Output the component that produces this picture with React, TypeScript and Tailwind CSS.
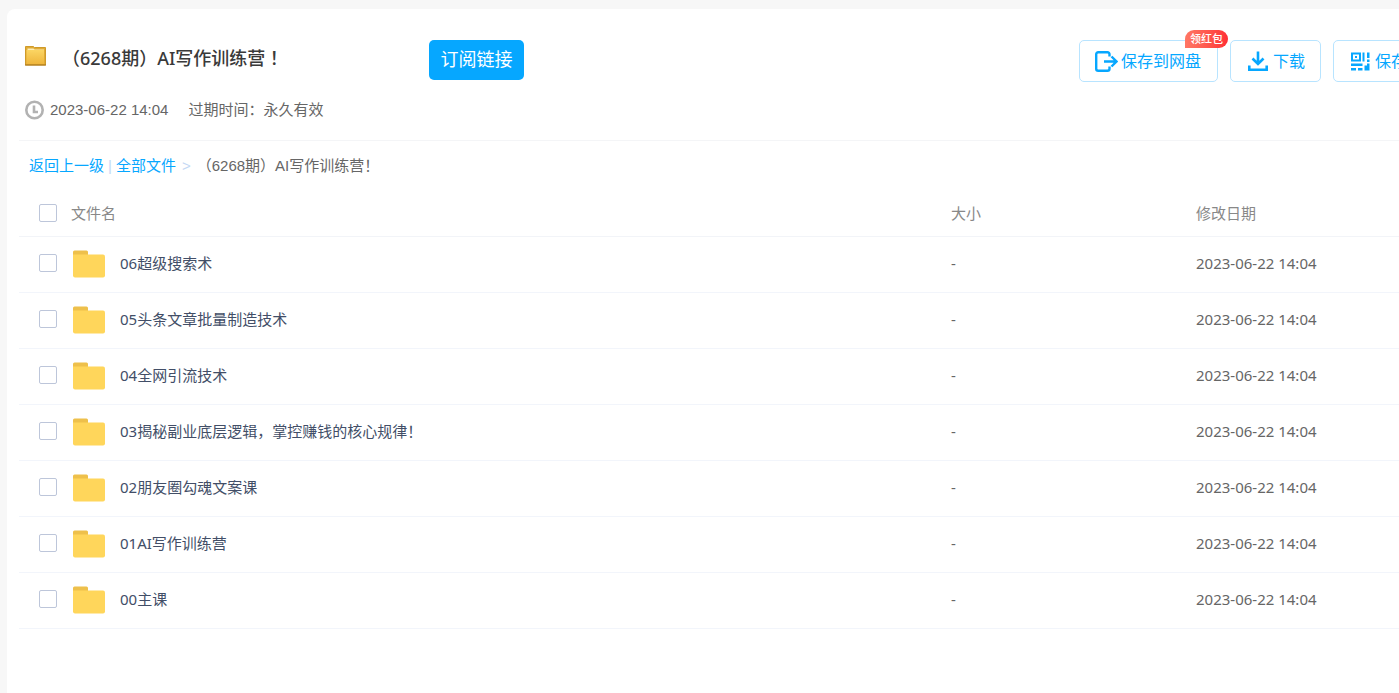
import React from "react";

const files = [
  "06超级搜索术",
  "05头条文章批量制造技术",
  "04全网引流技术",
  "03揭秘副业底层逻辑，掌控赚钱的核心规律！",
  "02朋友圈勾魂文案课",
  "01AI写作训练营",
  "00主课",
].map((name) => ({ name, size: "-", date: "2023-06-22 14:04" }));

const TitleFolderIcon = () => (
  <svg width="21" height="20" viewBox="0 0 21 20" className="shrink-0" aria-hidden="true">
    <defs>
      <linearGradient id="titleFolder" x1="0" y1="0" x2="0" y2="1">
        <stop offset="0" stopColor="#fbd563" />
        <stop offset="1" stopColor="#efb63c" />
      </linearGradient>
    </defs>
    <path d="M0.5 0.5h8l1 1h11v17.500h-20z" fill="#e0ab35" stroke="#cf9a2a" />
    <path d="M2.500 2.500h6l1 1h9.500v2h-16.500z" fill="#fdeeb8" />
    <path d="M1.500 4h17.500v14h-17.500z" fill="url(#titleFolder)" />
    <path d="M0 19h21" stroke="#a8741a" />
  </svg>
);

const ClockIcon = () => (
  <svg width="19" height="20" viewBox="0 0 19 20" fill="none" className="shrink-0" aria-hidden="true">
    <circle cx="9.500" cy="10" r="8.200" stroke="#b2b2b2" strokeWidth="2.600" />
    <path d="M9 5.500v6.500h4" stroke="#b2b2b2" strokeWidth="2.600" />
  </svg>
);

const FolderIcon = () => (
  <svg width="32" height="28" viewBox="0 0 32 28" className="block" aria-hidden="true">
    <path d="M0 2a1.500 1.500 0 0 1 1.500-1.500h12a1.500 1.500 0 0 1 1.500 1.500v5H0z" fill="#eec04b" />
    <path d="M0 4.500h30a2 2 0 0 1 2 2v19a2 2 0 0 1-2 2H2a2 2 0 0 1-2-2z" fill="#ffd65b" />
  </svg>
);

const SaveIcon = () => (
  <svg width="23" height="21" viewBox="0 0 23 21" fill="none" stroke="#06a7ff" strokeWidth="2.400" aria-hidden="true">
    <path d="M14.500 5.500V3.200a2 2 0 0 0-2-2H3.200a2 2 0 0 0-2 2v14.600a2 2 0 0 0 2 2h9.300a2 2 0 0 0 2-2V15.500" />
    <path d="M9 10.500h12M16.500 5.500l5 5-5 5" />
  </svg>
);

const DownloadIcon = () => (
  <svg width="20" height="20" viewBox="0 0 20 20" fill="none" stroke="#06a7ff" strokeWidth="2.600" aria-hidden="true">
    <path d="M10 0.500v12.500M4.500 7.500l5.500 5.500 5.500-5.500M1.300 14.500v4.200h17.400v-4.200" />
  </svg>
);

const QrIcon = () => (
  <svg width="19" height="19" viewBox="0 0 19 19" fill="#06a7ff" aria-hidden="true">
    <path fillRule="evenodd" d="M0 0.500h10v9H0zM2 2.500v5h6v-5z" />
    <path d="M4 4h2v2H4zM11.500 0.500h2v9h-2zM16 0.500h2.500V6H16zM16 7.500h2.500V10H16zM0 11.500h11.500V14H0zM0 16h5v2.500H0zM7 16h4.500v2.500H7zM13.500 13.500h5v5h-5zM16 11.500h2.500v2H16z" />
  </svg>
);

const ActionButton = ({
  icon: Icon,
  label,
  badge,
  className = "",
}: {
  icon: () => React.ReactElement;
  label: string;
  badge?: string;
  className?: string;
}) => (
  <button
    type="button"
    className={`relative flex h-[42px] shrink-0 items-center rounded-[5px] border border-[#b8e4ff] bg-white text-base text-[#06a7ff] ${className}`}
  >
    <Icon />
    <span className="pt-0.5">{label}</span>
    {badge && (
      <span className="absolute -top-[11px] -right-[11px] h-[18px] rounded-t-[9px] rounded-br-[9px] bg-linear-to-r from-[#ff7664] to-[#ff2d35] px-[5px] text-[11px] leading-[18px] font-medium text-white">
        {badge}
      </span>
    )}
  </button>
);

const Checkbox = ({ label }: { label: string }) => (
  <input
    type="checkbox"
    aria-label={label}
    className="block size-[18px] appearance-none rounded-xs border border-[#bdc6da] bg-white checked:border-[#06a7ff] checked:bg-[#06a7ff]"
  />
);

export default function App() {
  return (
    <div className="min-h-screen overflow-hidden bg-[#f7f7f7] pt-[9px] pl-[7px] font-['Liberation_Sans','Noto_Sans_CJK_SC',sans-serif] text-[15px] text-[#666]">
      <main className="min-h-[calc(100vh-9px)] rounded-tl-lg bg-white pl-3">
        <header className="border-b border-[#f4f5f7] pt-[31px] pl-1.5">
          <div className="flex h-[42px] items-start">
            <div className="flex w-[404px] shrink-0 items-start pt-[6px]">
              <TitleFolderIcon />
              <h1 className="ml-4 font-['Noto_Sans','Noto_Sans_CJK_TC',sans-serif] text-lg leading-6 font-medium text-[#3a3a3a]">
                （6268期）AI写作训练营！
              </h1>
            </div>
            <button type="button" className="h-10 w-[95px] shrink-0 rounded-[5px] bg-[#06a7ff] text-lg text-white">
              订阅链接
            </button>
            <div className="-mr-18 ml-auto flex shrink-0 gap-3">
              <ActionButton icon={SaveIcon} label="保存到网盘" badge="领红包" className="w-[139px] gap-[3px] pl-[15px]" />
              <ActionButton icon={DownloadIcon} label="下载" className="w-[91px] gap-[5px] pl-[17px]" />
              <ActionButton icon={QrIcon} label="保存" className="w-[138px] gap-[5px] pl-[17px]" />
            </div>
          </div>
          <div className="flex h-[58px] items-center pb-0.5">
            <ClockIcon />
            <span className="ml-1.5">2023-06-22 14:04</span>
            <span className="ml-5">过期时间：永久有效</span>
          </div>
        </header>

        <nav aria-label="文件路径" className="flex h-[50px] items-center pl-2.5">
          <a href="#parent" className="text-[#06a7ff]">返回上一级</a>
          <span className="mx-1 text-[#c4d8f4]">|</span>
          <a href="#all" className="text-[#06a7ff]">全部文件</a>
          <span className="ml-1.5 text-[#c4d8f4]">&gt;</span>
          <span className="ml-1.5">（6268期）AI写作训练营！</span>
        </nav>

        <table className="w-full table-fixed border-collapse text-left font-['Noto_Sans','Noto_Sans_CJK_SC',sans-serif]">
          <colgroup>
            <col className="w-[52px]" />
            <col />
            <col className="w-[245px]" />
            <col className="w-[203px]" />
          </colgroup>
          <thead>
            <tr className="h-[45px] border-b border-[#f2f4f8] text-[#888]">
              <th className="pl-5">
                <Checkbox label="全选" />
              </th>
              <th className="font-normal">文件名</th>
              <th className="font-normal">大小</th>
              <th className="font-normal">修改日期</th>
            </tr>
          </thead>
          <tbody>
            {files.map((file) => (
              <tr key={file.name} className="h-14 border-b border-[#f2f5fb]">
                <td className="pb-0.5 pl-5">
                  <Checkbox label={file.name} />
                </td>
                <td>
                  <div className="flex items-center gap-[15px] pl-0.5 text-[#424e67]">
                    <FolderIcon />
                    <span className="pb-0.5">{file.name}</span>
                  </div>
                </td>
                <td className="pb-0.5">{file.size}</td>
                <td className="pb-0.5">{file.date}</td>
              </tr>
            ))}
          </tbody>
        </table>
      </main>
    </div>
  );
}
